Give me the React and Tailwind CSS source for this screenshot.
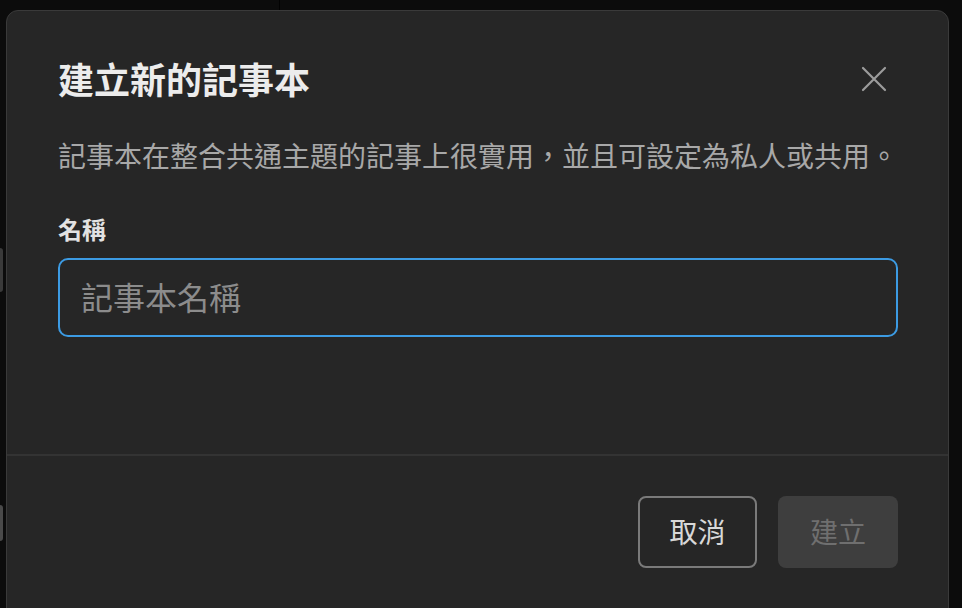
import { useState } from "react";

const font = { fontFamily: '"Noto Sans CJK TC", "Noto Sans", sans-serif' };

function CloseIcon() {
  return (
    <svg width="26" height="26" viewBox="0 0 26 26" fill="none">
      <path
        d="M2 2L24 24M24 2L2 24"
        stroke="#9c9c9c"
        strokeWidth="2.2"
        strokeLinecap="round"
      />
    </svg>
  );
}

export default function App() {
  const [name, setName] = useState("");

  return (
    <div
      className="relative w-[962px] h-[608px] overflow-hidden bg-[#0c0c0c]"
      style={font}
    >
      {/* page behind the overlay */}
      <div className="absolute left-[279px] top-0 h-[10px] w-px bg-[#020202]" />
      <div className="absolute left-0 top-[248px] h-[44px] w-[3px] rounded-r bg-[#3a3a3a]" />
      <div className="absolute left-0 top-[505px] h-[36px] w-[3px] rounded-r bg-[#4a4a4a]" />

      {/* dialog */}
      <div className="absolute left-[6px] top-[10px] w-[943px] h-[640px] rounded-[12px] border border-[#3a3a3a] bg-[#262626]">
        <div className="pl-[51px] pr-[50px] pt-[43px] pb-[117px]">
          <div className="flex items-center justify-between">
            <h2 className="text-[36px] leading-[48px] font-bold text-[#ececec]">
              建立新的記事本
            </h2>
            <button className="mr-[11px] mt-[2px] flex h-[26px] w-[26px] items-center justify-center">
              <CloseIcon />
            </button>
          </div>
          <p className="mt-[33px] text-[28px] leading-[40px] text-[#a8a8a8]">
            記事本在整合共通主題的記事上很實用，並且可設定為私人或共用。
          </p>
          <label className="mt-[38px] block text-[24px] leading-[32px] font-bold text-[#e2e2e2]">
            名稱
          </label>
          <input
            autoFocus
            value={name}
            onChange={(e) => setName(e.target.value)}
            placeholder="記事本名稱"
            className="mt-[13px] block h-[79px] w-full rounded-[10px] border-2 border-[#3c9be3] bg-transparent px-[21px] pb-[4px] text-[32px] text-[#e6e6e6] placeholder-[#8c8c8c] outline-none"
          />
        </div>
        <div className="h-[2px] bg-[#333333]" />
        <div className="flex justify-end gap-[21px] pl-[51px] pr-[50px] pt-[40px]">
          <button className="h-[72px] w-[119px] rounded-[8px] border-2 border-[#7a7a7a] pb-[2px] text-[28px] text-[#d8d8d8]">
            取消
          </button>
          <button className="h-[72px] w-[120px] rounded-[8px] bg-[#3e3e3e] pb-[2px] text-[28px] text-[#6f6f6f]">
            建立
          </button>
        </div>
      </div>
    </div>
  );
}
